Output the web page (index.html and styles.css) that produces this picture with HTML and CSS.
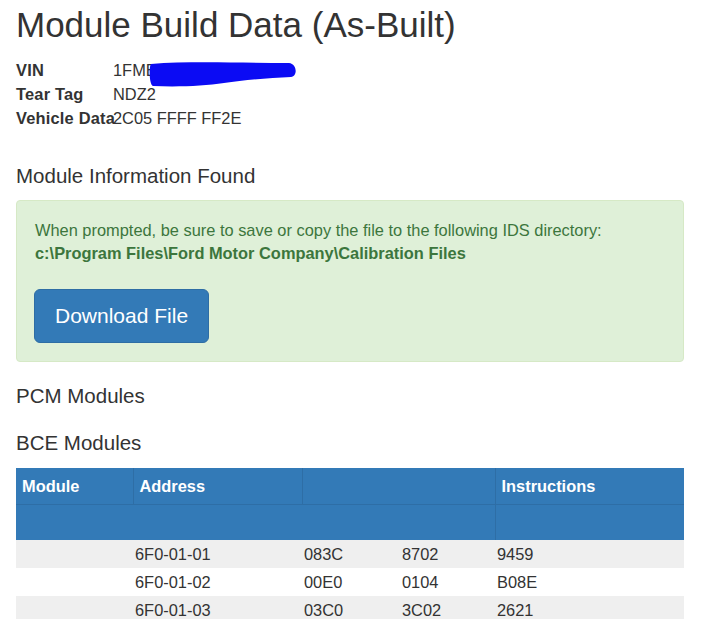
FILE: index.html
```html
<!DOCTYPE html>
<html lang="en">
<head>
  <meta charset="UTF-8" />
  <meta name="viewport" content="width=device-width, initial-scale=1" />
  <title>Module Build Data (As-Built)</title>
  <link rel="stylesheet" href="styles.css">
</head>
<body>
  <div class="page">
    <h1>Module Build Data (As-Built)</h1>

    <dl class="vehicle">
      <dt>VIN</dt>
      <dd class="vin">1FME
        <svg class="redact" width="150" height="28" viewBox="0 0 150 28" aria-hidden="true">
          <path d="M2,4 C40,1 90,3 140,3 C148,4 149,16 142,17 C120,18 95,20 75,23 C55,26 30,27 4,26 C0,25 0,6 2,4 Z" fill="#0b0bf4"/>
        </svg>
      </dd>
      <dt>Tear Tag</dt>
      <dd>NDZ2</dd>
      <dt>Vehicle Data</dt>
      <dd>2C05 FFFF FF2E</dd>
    </dl>

    <h4 class="section">Module Information Found</h4>

    <div class="alert">
      <p>When prompted, be sure to save or copy the file to the following IDS directory:<br>
      <strong>c:\Program Files\Ford Motor Company\Calibration Files</strong></p>
      <a class="btn" href="#">Download File</a>
    </div>

    <h4 class="section pcm">PCM Modules</h4>
    <h4 class="section bce">BCE Modules</h4>

    <table class="modules">
      <colgroup>
        <col class="c1"><col class="c2"><col class="c3"><col class="c4"><col class="c5">
      </colgroup>
      <thead>
        <tr>
          <th>Module</th>
          <th>Address</th>
          <th colspan="2"></th>
          <th>Instructions</th>
        </tr>
        <tr class="sub">
          <th colspan="4"></th>
          <th></th>
        </tr>
      </thead>
      <tbody>
        <tr><td></td><td>6F0-01-01</td><td>083C</td><td>8702</td><td>9459</td></tr>
        <tr><td></td><td>6F0-01-02</td><td>00E0</td><td>0104</td><td>B08E</td></tr>
        <tr><td></td><td>6F0-01-03</td><td>03C0</td><td>3C02</td><td>2621</td></tr>
      </tbody>
    </table>
  </div>
</body>
</html>
```

FILE: styles.css
```css
:root {
  --text: #333;
  --blue: #337ab7;
  --blue-line: #2e6ea6;
  --ok-bg: #dff0d8;
  --ok-border: #d6e9c6;
  --ok-text: #3c763d;
  --stripe: #efefef;
}
body {
  margin: 0;
  font-family: 'Liberation Sans', Arial, sans-serif;
  font-size: 16.4px;
  color: var(--text);
  background: #fff;
}
.page {
  width: 668px;
  margin-left: 16px;
}
h1 {
  font-size: 35px;
  font-weight: normal;
  line-height: 40px;
  margin: 5px 0 0;
}
.vehicle {
  display: grid;
  grid-template-columns: 97px 1fr;
  margin: 13px 0 0;
  line-height: 24px;
}
.vehicle dt {
  font-weight: bold;
  white-space: nowrap;
  letter-spacing: 0.2px;
}
.vehicle dd {
  margin: 0;
}
.vin {
  position: relative;
}
.redact {
  position: absolute;
  left: 36px;
  top: 2px;
}
.section {
  font-size: 20.5px;
  font-weight: normal;
  line-height: 24px;
  margin: 34px 0 0;
}
.alert {
  margin-top: 12px;
  background: var(--ok-bg);
  border: 1px solid var(--ok-border);
  border-radius: 4px;
  padding: 18px;
  color: var(--ok-text);
}
.alert p {
  margin: 0 0 24px;
  line-height: 23px;
}
.btn {
  display: inline-block;
  margin-left: -1px;
  background: var(--blue);
  border: 1px solid #2e6da4;
  border-radius: 6px;
  color: #fff;
  text-decoration: none;
  font-size: 21px;
  line-height: 24px;
  padding: 14px 20px;
}
.pcm {
  margin-top: 22px;
}
.bce {
  margin-top: 23px;
}
.modules {
  margin-top: 13px;
  width: 668px;
  border-collapse: collapse;
  table-layout: fixed;
}
.c1 { width: 117px; }
.c2 { width: 169px; }
.c3 { width: 98px; }
.c4 { width: 95px; }
.c5 { width: 189px; }
.modules th {
  box-sizing: border-box;
  background: var(--blue);
  color: #fff;
  text-align: left;
  height: 35px;
  padding: 0 6px;
  vertical-align: top;
  line-height: 36px;
  border-left: 1px solid var(--blue-line);
  border-bottom: 1px solid var(--blue-line);
}
.modules th:first-child {
  border-left: none;
}
.modules tr.sub th {
  border-bottom: none;
  line-height: 34px;
}
.modules td {
  height: 28px;
  padding: 0 2px;
  line-height: 28px;
}
.modules tbody tr:nth-child(odd) td {
  background: var(--stripe);
}
```
